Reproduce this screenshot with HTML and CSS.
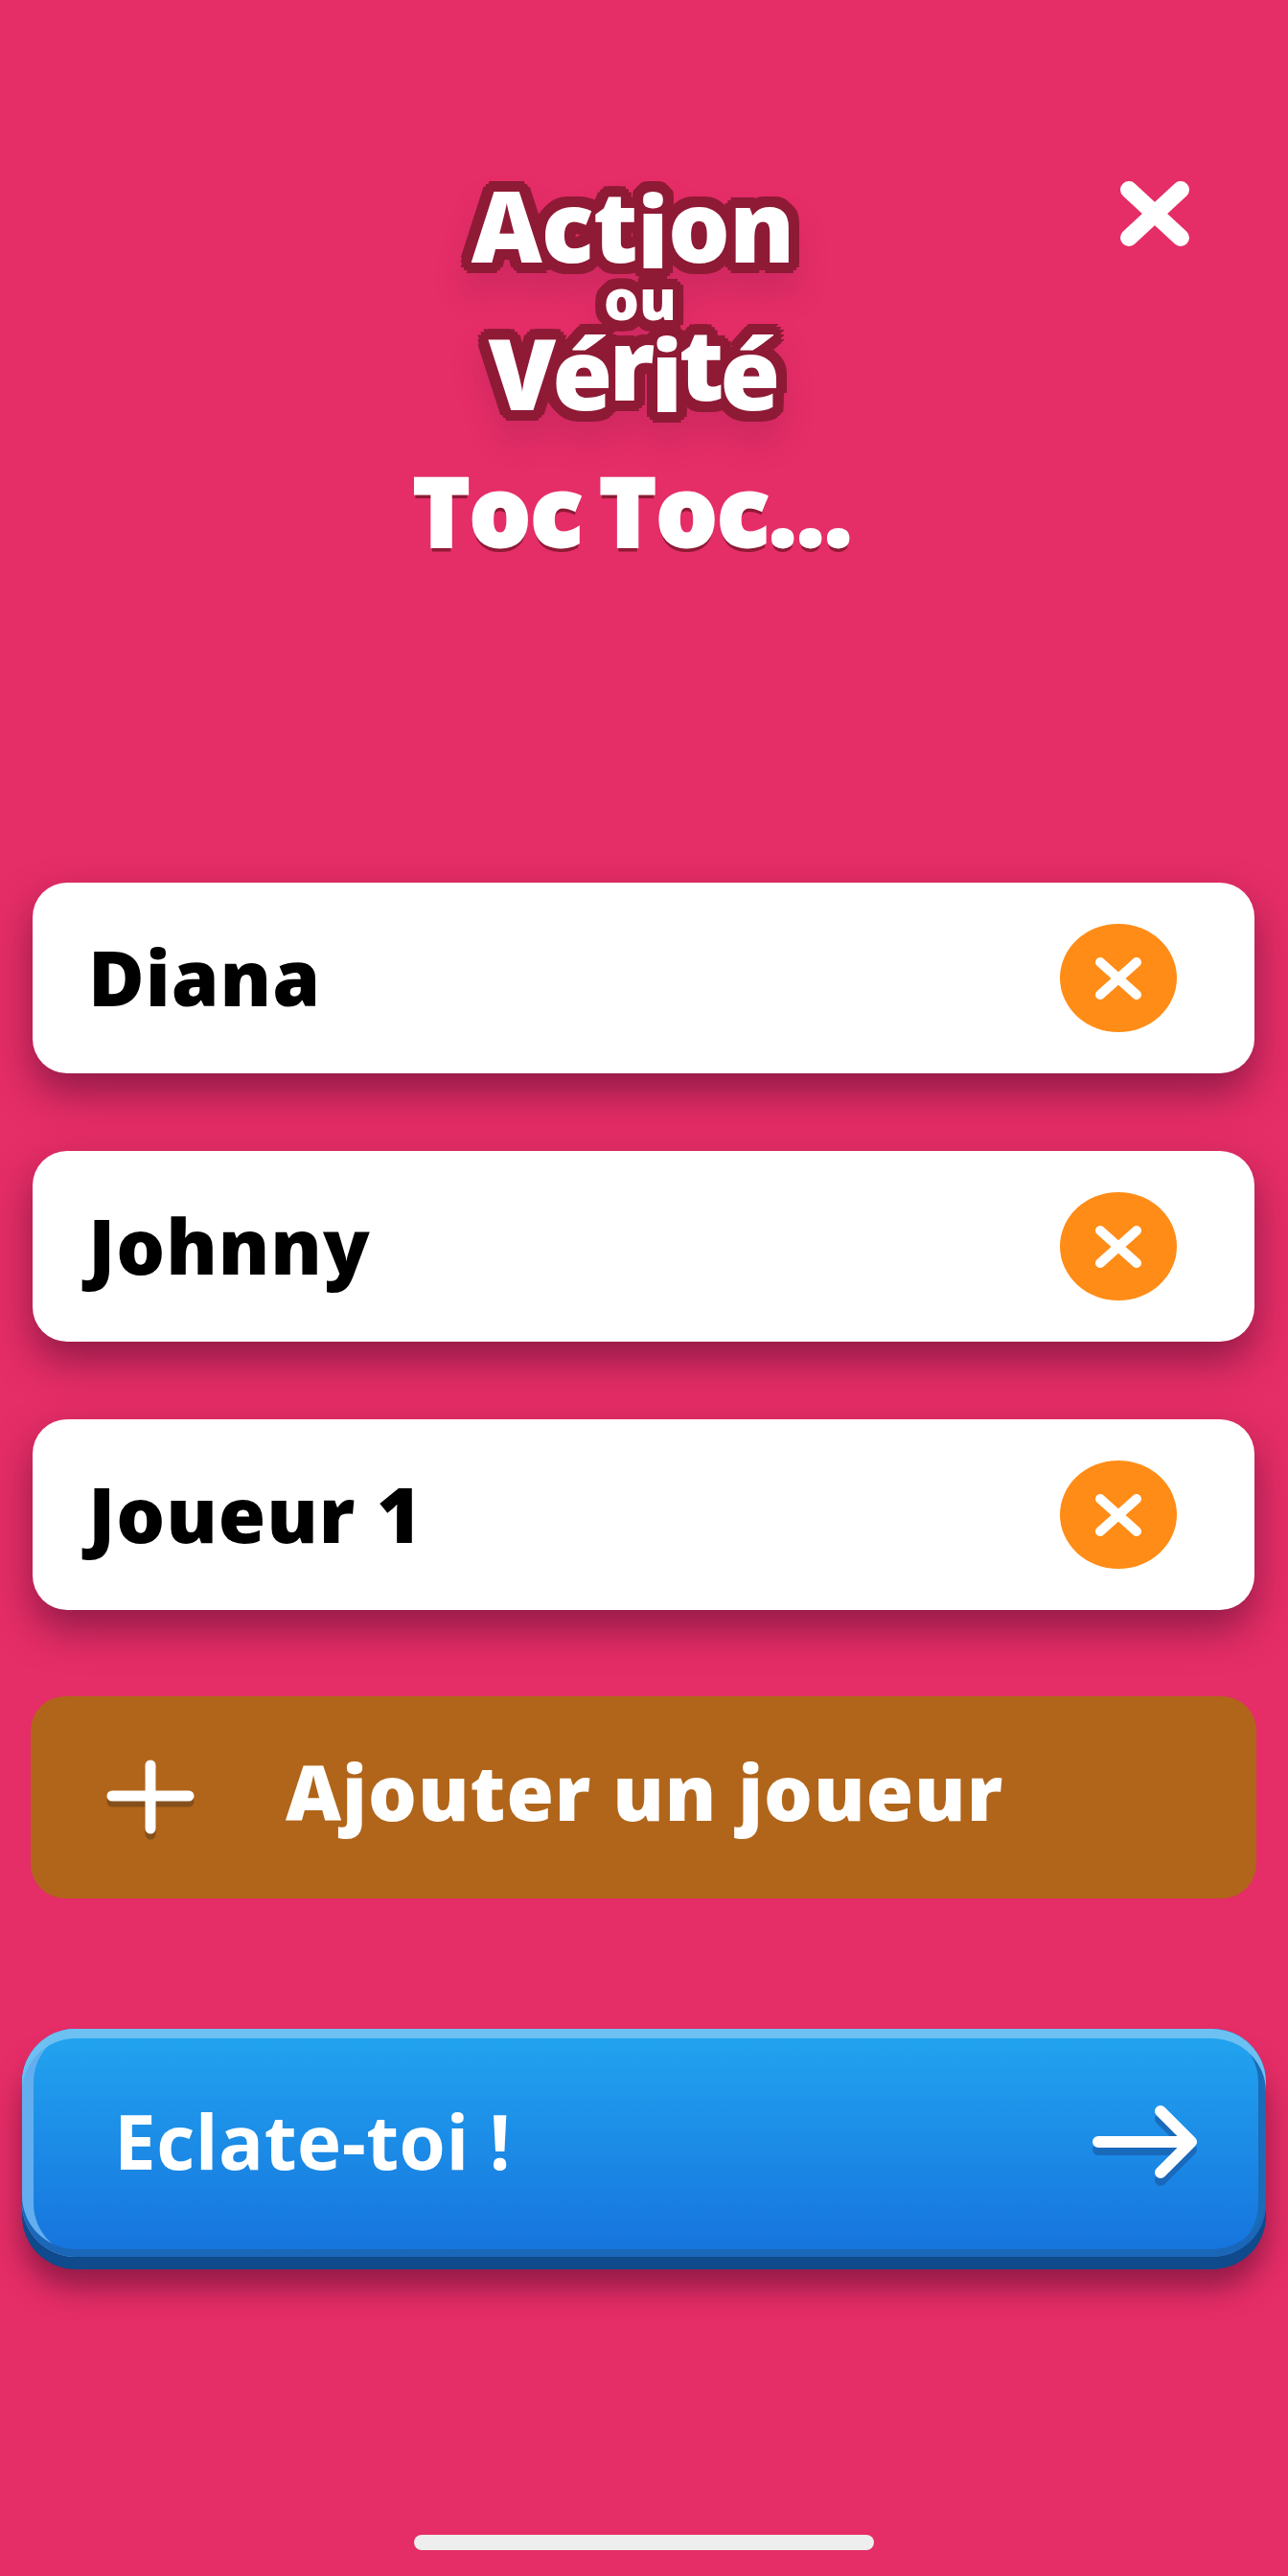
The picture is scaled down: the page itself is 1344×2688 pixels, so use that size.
FILE: index.html
```html
<!DOCTYPE html>
<html lang="fr">
<head>
    <meta charset="UTF-8">
    <meta name="viewport" content="width=device-width, initial-scale=1.0">
    <title>Action ou Vérité</title>
    <link rel="stylesheet" href="styles.css">
</head>
<body>
    <main class="screen">
        <header class="top">
            <div class="top-side"></div>
            <div class="brand">
                <div class="logo">
                    <div class="logo-line logo-action">Act<span class="ltr ltr-drop">i</span>on</div>
                    <div class="logo-line logo-ou">ou</div>
                    <div class="logo-line logo-verite">Vé<span class="ltr ltr-up">r</span><span class="ltr ltr-low">i</span><span class="ltr ltr-up">t</span>é</div>
                </div>
                <h1 class="title">Toc Toc...</h1>
            </div>
            <div class="top-side top-side-right">
                <button class="close" type="button" aria-label="Fermer">
                    <svg width="72" height="68" viewBox="0 0 72 68"><path d="M9 9 L63 59 M63 9 L9 59" stroke="#fff" stroke-width="18" stroke-linecap="round" fill="none"/></svg>
                </button>
            </div>
        </header>

        <ul class="players">
            <li class="player">
                <span class="player-name">Diana</span>
                <button class="remove" type="button" aria-label="Retirer Diana">
                    <svg width="48" height="44" viewBox="0 0 48 44"><path d="M5 5 L43 39 M43 5 L5 39" stroke="#fff" stroke-width="10" stroke-linecap="round" fill="none"/></svg>
                </button>
            </li>
            <li class="player">
                <span class="player-name">Johnny</span>
                <button class="remove" type="button" aria-label="Retirer Johnny">
                    <svg width="48" height="44" viewBox="0 0 48 44"><path d="M5 5 L43 39 M43 5 L5 39" stroke="#fff" stroke-width="10" stroke-linecap="round" fill="none"/></svg>
                </button>
            </li>
            <li class="player">
                <span class="player-name">Joueur 1</span>
                <button class="remove" type="button" aria-label="Retirer Joueur 1">
                    <svg width="48" height="44" viewBox="0 0 48 44"><path d="M5 5 L43 39 M43 5 L5 39" stroke="#fff" stroke-width="10" stroke-linecap="round" fill="none"/></svg>
                </button>
            </li>
        </ul>

        <button class="add" type="button">
            <svg class="add-icon" width="92" height="84" viewBox="0 0 92 84"><path d="M46 6 V72 M6 38 H86" stroke="#7a4a1c" stroke-opacity=".8" stroke-width="11" stroke-linecap="round" fill="none" transform="translate(0 6)"/><path d="M46 6 V72 M6 38 H86" stroke="#fff" stroke-width="11" stroke-linecap="round" fill="none"/></svg>
            <span class="add-label">Ajouter un joueur</span>
        </button>

        <button class="go" type="button">
            <span class="go-label">Eclate-toi !</span>
            <svg class="go-icon" width="112" height="86" viewBox="0 0 112 86"><path d="M7 38 H104 M72 6 L104 38 L72 70" stroke="#1a5fae" stroke-opacity=".75" stroke-width="12" stroke-linecap="round" stroke-linejoin="round" fill="none" transform="translate(0 8)"/><path d="M7 38 H104 M72 6 L104 38 L72 70" stroke="#fff" stroke-width="12" stroke-linecap="round" stroke-linejoin="round" fill="none"/></svg>
        </button>

        <div class="home-bar"></div>
    </main>
</body>
</html>
```

FILE: styles.css
```css
* {
    box-sizing: border-box;
}
body {
    margin: 0;
    background-color: #e52d67;
    font-family: "Open Sans", "Noto Sans", sans-serif;
}
button {
    border: none;
    background: none;
    padding: 0;
    font-family: inherit;
    color: #ffffff;
}
.screen {
    height: 2688px;
    overflow: hidden;
    display: flex;
    flex-direction: column;
    background-color: #e52d67;
}

/* header */
.top {
    display: grid;
    grid-template-columns: 1fr auto 1fr;
    padding: 189px 24px 0 0;
    height: 921px;
}
.top-side-right {
    display: flex;
    justify-content: flex-end;
    align-items: flex-start;
    padding-right: 79px;
}
.close {
    display: block;
    height: 68px;
}
.brand {
    display: flex;
    flex-direction: column;
    align-items: center;
}
.logo {
    display: flex;
    flex-direction: column;
    align-items: center;
    height: 290px;
    /* chained offsets dilate the letters into a rounded outline */
    filter: drop-shadow(5px 0 0 #8e1a35) drop-shadow(-5px 0 0 #8e1a35)
        drop-shadow(0 5px 0 #8e1a35) drop-shadow(0 -5px 0 #8e1a35)
        drop-shadow(3px 3px 0 #8e1a35) drop-shadow(-3px -3px 0 #8e1a35)
        drop-shadow(3px -3px 0 #8e1a35) drop-shadow(-3px 3px 0 #8e1a35)
        drop-shadow(0 22px 14px rgba(120, 20, 70, 0.18));
}
.logo-line {
    color: #ffffff;
    font-weight: 800;
    white-space: nowrap;
}
.ltr {
    display: inline-block;
}
.ltr-drop {
    transform: translateY(6px);
}
.ltr-low {
    transform: translateY(2px);
}
.ltr-up {
    transform: translateY(-10px);
}
.logo-action {
    font-size: 102px;
    line-height: 92px;
    letter-spacing: -1px;
}
.logo-ou {
    font-size: 58px;
    line-height: 46px;
    margin-top: 8px;
    transform: translateX(8px);
}
.logo-verite {
    font-size: 102px;
    line-height: 104px;
    letter-spacing: -4px;
    margin-top: 2px;
}
.title {
    margin: 2px 0 0;
    color: #ffffff;
    font-size: 100px;
    line-height: 100px;
    font-weight: 800;
    word-spacing: -8px;
    white-space: nowrap;
    -webkit-text-stroke: 3px #ffffff;
    text-shadow: 0 5px 0 #8e1a35;
}

/* players */
.players {
    list-style: none;
    margin: 0;
    padding: 0 35px 0 34px;
    display: flex;
    flex-direction: column;
    gap: 81px;
}
.player {
    height: 199px;
    background: #ffffff;
    border-radius: 36px;
    padding: 0 81px 0 58px;
    display: flex;
    align-items: center;
    justify-content: space-between;
    box-shadow: 0 20px 40px rgba(90, 15, 50, 0.6);
}
.player-name {
    color: #000000;
    font-size: 80px;
    font-weight: 800;
    letter-spacing: 1px;
    line-height: 1;
    margin-top: -4px;
}
.remove {
    width: 122px;
    height: 113px;
    border-radius: 50%;
    background: #ff8c17;
    display: flex;
    align-items: center;
    justify-content: center;
}

/* actions */
.add {
    margin: 90px 33px 0 32px;
    height: 211px;
    background: #b1651a;
    border-radius: 36px;
    display: flex;
    align-items: center;
    padding: 0 0 0 79px;
}
.add-icon {
    margin-right: 95px;
    margin-top: 4px;
}
.add-label {
    font-size: 80px;
    font-weight: 800;
    letter-spacing: 1px;
    line-height: 1;
    margin-top: -14px;
}
.go {
    margin: 136px 23px 0 23px;
    height: 238px;
    border-radius: 56px;
    background: linear-gradient(#22a5f0, #1673dd);
    box-shadow: inset 0 10px 0 #6cc0f2, inset 0 -8px 0 #1a66b8, inset 12px 0 0 #62aeef, inset -8px 0 0 #1a6cb8,
        0 13px 0 #0e4a8c, 0 32px 30px rgba(90, 15, 50, 0.6);
    display: flex;
    align-items: center;
    justify-content: space-between;
    padding: 0 70px 0 96px;
}
.go-label {
    font-size: 78px;
    font-weight: 700;
    letter-spacing: 0.5px;
    line-height: 1;
    margin-top: -4px;
}
.go-icon {
    margin-top: 8px;
}
.home-bar {
    width: 480px;
    height: 16px;
    border-radius: 8px;
    background: #eeeeee;
    margin: 290px auto 0;
}
```
